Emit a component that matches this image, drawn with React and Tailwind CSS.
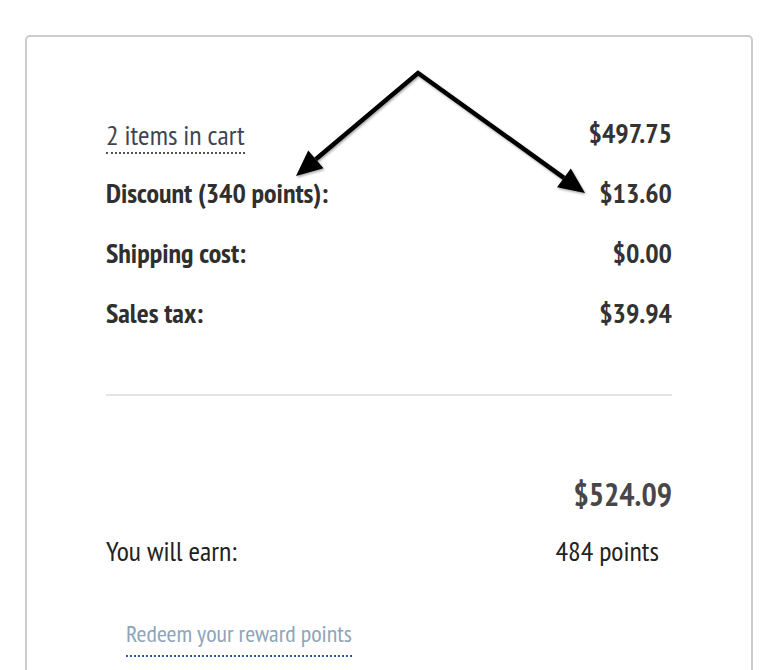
import React from 'react';

// Order summary card with the two annotation arrows drawn over it
const rows = [
  { label: 'Discount (340 points):', value: '$13.60' },
  { label: 'Shipping cost:', value: '$0.00' },
  { label: 'Sales tax:', value: '$39.94' },
];

const Arrows = () => (
  <svg
    className="absolute inset-0 w-full h-full pointer-events-none"
    viewBox="0 0 778 670"
    xmlns="http://www.w3.org/2000/svg"
  >
    <defs>
      <filter id="arrow-shadow" x="-20%" y="-20%" width="140%" height="140%">
        <feDropShadow dx="1" dy="1.5" stdDeviation="1.2" floodColor="#000" floodOpacity="0.35" />
      </filter>
    </defs>
    <g filter="url(#arrow-shadow)">
      <polyline
        points="315.8,159.3 418,73 563.9,177.8"
        fill="none"
        stroke="#000"
        strokeWidth="4.5"
        strokeLinejoin="miter"
      />
      <polygon points="296,176 323.5,168.2 308.2,150.4" fill="#000" />
      <polygon points="585,193 557,187.2 570.8,168.4" fill="#000" />
    </g>
  </svg>
);

export default function App() {
  return (
    <div className="relative h-[670px] overflow-hidden bg-white px-[25px] pt-[35px] font-['PT_Sans_Narrow','Roboto_Condensed',Roboto,sans-serif] [font-stretch:75%]">
      <div className="min-h-[700px] rounded-[5px] border-2 border-[#cccccc] px-[79px] pt-[78px]">
        <div className="flex flex-col gap-[24px]">
          <div className="flex h-[36px] items-center justify-between">
            <span className="mt-[5px] self-start border-b-2 border-dotted border-[#555555] pb-[2px] text-[28px] leading-[30px] text-[#3d4650]">
              2 items in cart
            </span>
            <span className="text-[28px] font-bold text-[#333333]">$497.75</span>
          </div>
          {rows.map((row) => (
            <div key={row.label} className="flex h-[36px] items-center justify-between">
              <span className="text-[28px] font-bold text-[#2f2f2f]">{row.label}</span>
              <span className="text-[28px] font-bold text-[#333333]">{row.value}</span>
            </div>
          ))}
        </div>

        <div className="mt-[63px] h-[2px] bg-[#e4e4e4]" />

        <div className="mt-[78px] flex h-[40px] items-center justify-end">
          <span className="text-[32px] font-bold text-[#474747]">$524.09</span>
        </div>

        <div className="mt-[19px] flex h-[36px] items-center justify-between pr-[13px]">
          <span className="text-[28px] text-[#222222]">You will earn:</span>
          <span className="text-[28px] text-[#222222]">484 points</span>
        </div>

        <div className="mt-[50px] pl-[20px]">
          <span className="border-b-2 border-dotted border-[#2b5cab] pb-[6px] text-[24px] leading-[30px] text-[#8ea4b8]">
            Redeem your reward points
          </span>
        </div>
      </div>
      <Arrows />
    </div>
  );
}
